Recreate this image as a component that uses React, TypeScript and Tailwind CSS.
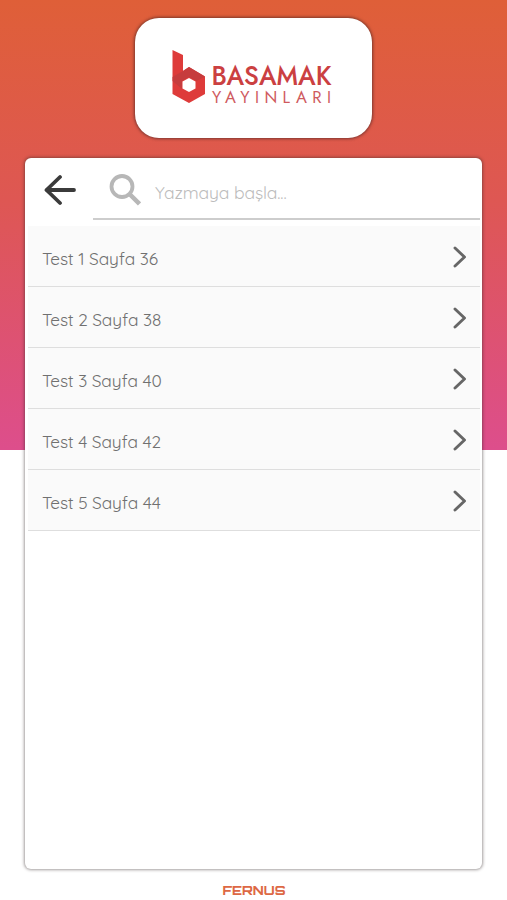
import React from 'react';

const tests = [
  { name: 'Test 1', page: 36 },
  { name: 'Test 2', page: 38 },
  { name: 'Test 3', page: 40 },
  { name: 'Test 4', page: 42 },
  { name: 'Test 5', page: 44 },
];

function PublisherLogo() {
  return (
    <svg width="162" height="60" viewBox="0 -2 162 60" className="relative -left-[2px] overflow-visible font-[Jost,Lato,'Liberation_Sans',sans-serif]" role="img" aria-label="Basamak Yayınları">
      <path d="M1.5 1 12 6v16l6-4 16 9.500v17.500L18 54 1.500 45z" fill="#de3b3a" />
      <path d="M1.500 28 12 22l6-4 16 9.500-8.500 4.500L18 28l-7 4v8l-9.500-8z" fill="#c63c3d" />
      <path d="m18 29 6.500 3.500v7L18 43l-6.500-3.500v-7z" fill="#fff" />
      <text x="40.500" y="35.500" fontSize="27" fontWeight="500" textLength="120" lengthAdjust="spacingAndGlyphs" fill="#cb4041">BASAMAK</text>
      <text x="41" y="54.200" fontSize="16.500" textLength="119" fill="#cf5a5e">YAYINLARI</text>
    </svg>
  );
}

function BackArrow() {
  return (
    <svg width="32" height="32" viewBox="0 0 32 32" fill="none" stroke="#3b3b3b" strokeWidth="3.800" strokeLinecap="round" strokeLinejoin="round">
      <path d="M16 3 2.500 16 16 29M2.500 16H30" />
    </svg>
  );
}

function SearchIcon() {
  return (
    <svg width="32" height="32" viewBox="0 0 32 32" fill="none" stroke="#b7b7b7" strokeWidth="3.800">
      <circle cx="13" cy="12.500" r="10.500" />
      <path d="m20.500 20 10 10" strokeWidth="4.500" />
    </svg>
  );
}

function Chevron() {
  return (
    <svg width="14" height="22" viewBox="0 0 14 22" fill="none" stroke="#666" strokeWidth="2.900" strokeLinecap="round" strokeLinejoin="round">
      <path d="m2 2 9.500 9L2 20" />
    </svg>
  );
}

export default function App() {
  return (
    <div className="flex h-[900px] w-[507px] flex-col items-center overflow-hidden bg-[linear-gradient(to_bottom,#df5f38_0px,#de5753_200px,#dd4e8c_450px,#fff_450px)] pt-[18px] font-[Quicksand,Lato,'Noto_Sans',sans-serif]">
      <header className="flex h-[120px] w-[237px] shrink-0 items-center justify-center rounded-[24px] bg-white pb-[2px] shadow-[0_0_3px_1px_rgba(60,30,30,0.6)]">
        <PublisherLogo />
      </header>

      <main className="mt-5 h-[711px] w-[457px] shrink-0 rounded-[6px] bg-white pl-[3px] pr-[2px] shadow-[0_0_3px_1px_rgba(50,40,40,0.45)]">
        <div className="flex h-[67.5px]">
          <button className="flex h-16 w-[65px] items-center justify-center pr-[2px]" aria-label="Geri">
            <BackArrow />
          </button>
          <label className="flex h-[62px] flex-1 items-center border-b-2 border-[#cdcdcd] pl-4 pt-[4px]">
            <SearchIcon />
            <span className="ml-[14px] mt-[4px] text-[17.5px] leading-6 tracking-[-0.14px] text-[#bcbcbc]">Yazmaya başla...</span>
          </label>
        </div>
        <ul>
          {tests.map((test) => (
            <li key={test.name} className="flex h-[61.1px] items-center justify-between border-b border-[#dedede] bg-[#fafafa] pl-[14px] pr-[13px] pt-[3px]">
              <span className="pt-[4px] text-[17.3px] leading-6 tracking-[-0.12px] text-[#707070]">{test.name} Sayfa {test.page}</span>
              <Chevron />
            </li>
          ))}
        </ul>
      </main>

      <footer className="mt-[13px]">
        <svg width="64" height="16" viewBox="0 0 64 16" className="overflow-visible font-[Orbitron,'DejaVu_Sans',sans-serif]" role="img" aria-label="Fernus">
          <text x="0.500" y="12.500" fontSize="12.500" fontWeight="800" textLength="63" lengthAdjust="spacingAndGlyphs" fill="#dd6844">FERNUS</text>
        </svg>
      </footer>
    </div>
  );
}
